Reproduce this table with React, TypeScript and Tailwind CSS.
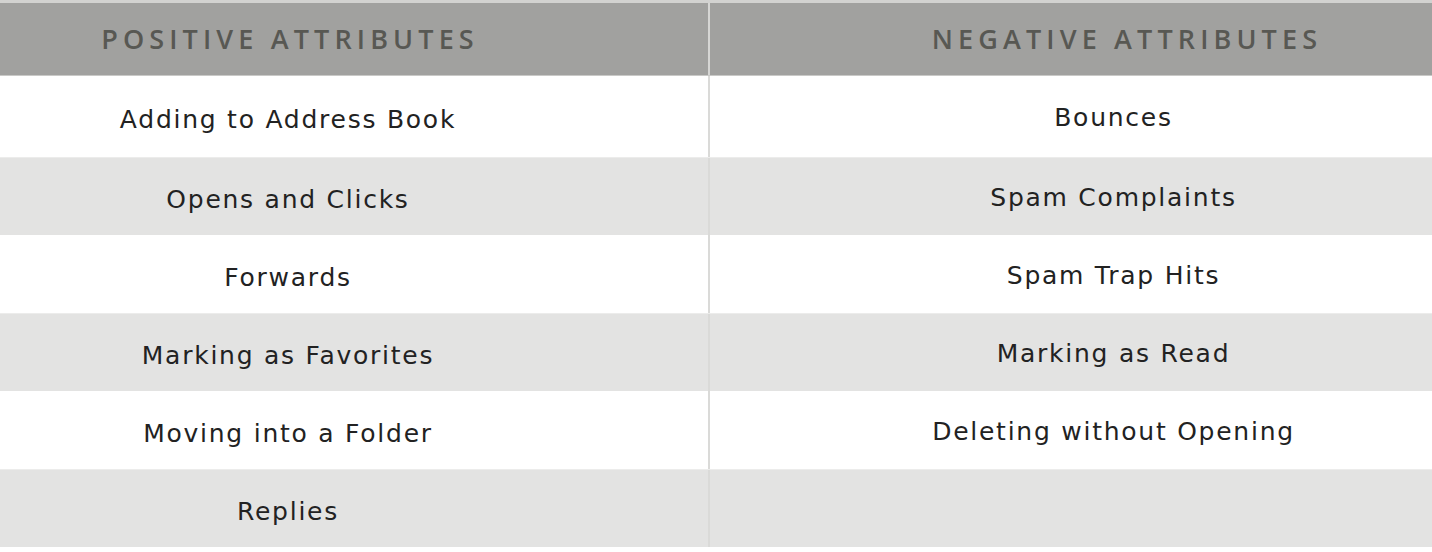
import React from 'react';

const rows: [string, string][] = [
  ['Adding to Address Book', 'Bounces'],
  ['Opens and Clicks', 'Spam Complaints'],
  ['Forwards', 'Spam Trap Hits'],
  ['Marking as Favorites', 'Marking as Read'],
  ['Moving into a Folder', 'Deleting without Opening'],
  ['Replies', ''],
];

const App = () => {
  return (
    <div className="w-[1432px] h-[552px] overflow-hidden bg-white">
      <div className="border-t-[3px] border-[#d2d2d0]">
        {/* header */}
        <div className="flex h-[73px] bg-[#a1a19f] border-b border-[#c9c9c7] font-['Open_Sans',sans-serif]">
          <div className="w-[710px] flex items-center justify-center pr-[128px] border-r-2 border-[#d6d6d4]">
            <span className="text-[27px] font-semibold tracking-[0.19em] text-[#585853]">POSITIVE ATTRIBUTES</span>
          </div>
          <div className="flex-1 flex items-center justify-center pl-[112px]">
            <span className="text-[27px] font-semibold tracking-[0.19em] text-[#585853]">NEGATIVE ATTRIBUTES</span>
          </div>
        </div>

        {rows.map(([pos, neg], i) => (
          <div
            key={i}
            className={
              i === 0
                ? 'flex h-[81px] bg-white'
                : i % 2 === 0
                  ? 'flex h-[78px] bg-white'
                  : 'flex h-[78px] bg-[#e3e3e2] border-t border-[#ececeb]'
            }
          >
            <div className="w-[710px] flex items-center justify-center pr-[132px] pt-[7px] border-r-2 border-[#dadad8]">
              <span className="text-[25px] tracking-[0.07em] text-[#222222] font-['DejaVu_Sans',sans-serif]">{pos}</span>
            </div>
            <div className="flex-1 flex items-center justify-center pl-[85px] pt-[3px]">
              <span className="text-[25px] tracking-[0.07em] text-[#222222] font-['DejaVu_Sans',sans-serif]">{neg}</span>
            </div>
          </div>
        ))}
      </div>
    </div>
  );
};

export default App;
